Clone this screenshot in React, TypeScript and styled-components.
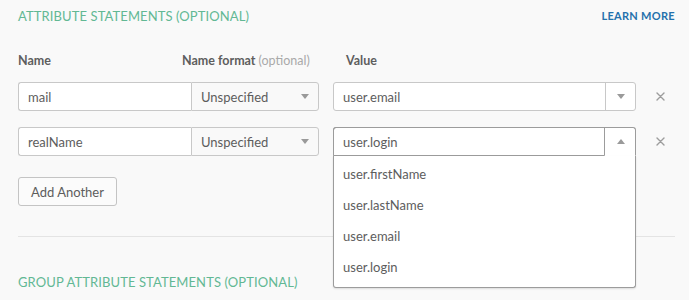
import React from "react";
import styled, { createGlobalStyle } from "styled-components";

const GlobalStyle = createGlobalStyle`
  html, body {
    margin: 0;
    padding: 0;
    background: #f9f9f9;
  }
  body {
    font-family: "Lato", "Open Sans", "Liberation Sans", sans-serif;
    color: #5d5d5d;
  }
`

interface attrRow {
  name : string,
  format : string,
  value : string,
  open? : boolean
}

const rows : attrRow[] = [
  { name: 'mail', format: 'Unspecified', value: 'user.email' },
  { name: 'realName', format: 'Unspecified', value: 'user.login', open: true },
]

const options = ['user.firstName', 'user.lastName', 'user.email', 'user.login']

export default function App () {
  return (
    <Page>
      <GlobalStyle />
      <Header>
        <SectionTitle>Attribute Statements (optional)</SectionTitle>
        <LearnMore href="#">Learn More</LearnMore>
      </Header>

      <Labels>
        <Label>Name</Label>
        <Label>Name format <Optional>(optional)</Optional></Label>
        <Label>Value</Label>
      </Labels>

      <Rows>
        {rows.map((row) => (
          <Grid key={row.name}>
            <NameInput>{row.name}</NameInput>
            <Select>
              {row.format}
              <Caret />
            </Select>
            <Combo $open={row.open}>
              <ComboText $open={row.open}>{row.value}</ComboText>
              <ComboArrow $open={row.open}>
                <Caret $up={row.open} />
              </ComboArrow>
              {row.open && (
                <Menu>
                  {options.map((opt) => (
                    <MenuItem key={opt}>{opt}</MenuItem>
                  ))}
                </Menu>
              )}
            </Combo>
            <Remove aria-label="remove">
              <svg width="9" height="9" viewBox="0 0 9 9">
                <path d="M1 1 L8 8 M8 1 L1 8" stroke="#9d9d9d" strokeWidth="1.4" strokeLinecap="round" />
              </svg>
            </Remove>
          </Grid>
        ))}
      </Rows>

      <AddButton>Add Another</AddButton>

      <Divider />

      <SectionTitle>Group Attribute Statements (optional)</SectionTitle>
    </Page>
  )
}

const Page = styled.div`
  width: 689px;
  height: 300px;
  box-sizing: border-box;
  padding: 0 14px 0 18px;
  overflow: hidden;
`

const Header = styled.div`
  height: 31px;
  display: flex;
  align-items: center;
  justify-content: space-between;
`

const SectionTitle = styled.div`
  font-size: 13px;
  color: #62b894;
  text-transform: uppercase;
  letter-spacing: 0.1px;
`

const LearnMore = styled.a`
  font-size: 11px;
  font-weight: 700;
  color: #2471ac;
  text-decoration: none;
  text-transform: uppercase;
  letter-spacing: 0.3px;
`

const Labels = styled.div`
  margin-top: 22px;
  display: grid;
  grid-template-columns: 164px 164px 1fr;
`

const Label = styled.div`
  height: 16px;
  font-size: 12.5px;
  font-weight: 700;
  color: #5e5e5e;
`

const Optional = styled.span`
  font-weight: 400;
  color: #a9a9a9;
`

const Rows = styled.div`
  margin-top: 13px;
  display: flex;
  flex-direction: column;
  gap: 16px;
`

const Grid = styled.div`
  display: grid;
  grid-template-columns: 173px 128px 317px 1fr;
  align-items: center;
`

const NameInput = styled.div`
  height: 29px;
  box-sizing: border-box;
  padding: 0 9px;
  display: flex;
  align-items: center;
  font-size: 13px;
  background: #fff;
  border: 1px solid #c8c8c8;
  border-right: none;
  border-radius: 3px 0 0 3px;
`

const Select = styled.div`
  height: 29px;
  box-sizing: border-box;
  padding: 0 9px 0 9px;
  display: flex;
  align-items: center;
  justify-content: space-between;
  font-size: 13px;
  background: #f9f9f9;
  border: 1px solid #c8c8c8;
  border-radius: 0 3px 3px 0;
`

const Caret = styled.span<{$up? : boolean}>`
  width: 0;
  height: 0;
  border-left: 4px solid transparent;
  border-right: 4px solid transparent;
  ${(props) => props.$up
    ? {borderBottom: '5px solid #9a9a9a'}
    : {borderTop: '5px solid #9a9a9a'}}
`

const Combo = styled.div<{$open? : boolean}>`
  position: relative;
  margin-left: 14px;
  height: 29px;
  box-sizing: border-box;
  display: flex;
  background: #fff;
  border: 1px solid ${(props) => props.$open ? '#9c9c9c' : '#c8c8c8'};
  border-bottom-color: ${(props) => props.$open ? 'transparent' : '#c8c8c8'};
  border-radius: ${(props) => props.$open ? '3px 3px 0 0' : '3px'};
`

const ComboText = styled.div<{$open? : boolean}>`
  flex: 1;
  margin: -1px 0 -1px -1px;
  padding: 0 9px;
  display: flex;
  align-items: center;
  font-size: 13px;
  border: 1px solid ${(props) => props.$open ? '#9c9c9c' : 'transparent'};
  border-radius: 3px 0 0 0;
`

const ComboArrow = styled.div<{$open? : boolean}>`
  width: 29px;
  display: flex;
  align-items: center;
  justify-content: center;
  border-left: 1px solid ${(props) => props.$open ? 'transparent' : '#c8c8c8'};
`

const Menu = styled.div`
  position: absolute;
  top: 28px;
  left: -1px;
  right: -1px;
  padding: 2px 0 5px;
  background: #fff;
  border: 1px solid #9c9c9c;
  border-top: none;
  border-radius: 0 0 3px 3px;
  box-shadow: 0 1px 2px rgba(0, 0, 0, 0.12);
  z-index: 2;
`

const MenuItem = styled.div`
  height: 31px;
  padding: 0 9px;
  display: flex;
  align-items: center;
  font-size: 13px;
  color: #5d5d5d;
`

const Remove = styled.div`
  padding-left: 10px;
  display: flex;
  justify-content: center;
  align-items: center;
`

const AddButton = styled.button`
  margin-top: 21px;
  width: 99px;
  height: 29px;
  font-family: inherit;
  font-size: 13px;
  color: #5d5d5d;
  background: #fbfbfb;
  border: 1px solid #c4c4c4;
  border-radius: 3px;
  cursor: pointer;
`

const Divider = styled.hr`
  margin: 30px 0 37px;
  border: none;
  border-top: 1px solid #e4e4e4;
`
